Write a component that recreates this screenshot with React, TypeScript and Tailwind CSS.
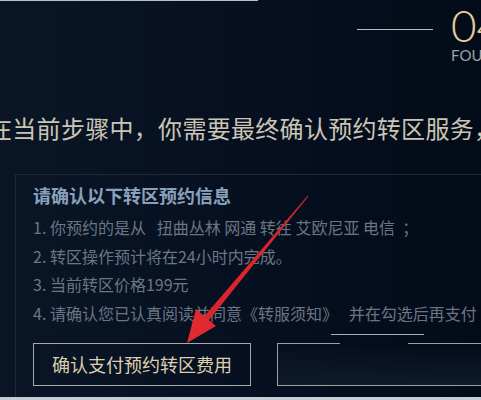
import React from 'react';

const CJK = { fontFamily: '"Noto Sans CJK SC", "Noto Sans", sans-serif' };

const ITEMS = [
  '1. 你预约的是从   扭曲丛林 网通 转往 艾欧尼亚 电信  ；',
  '2. 转区操作预计将在24小时内完成。',
  '3. 当前转区价格199元',
  '4. 请确认您已认真阅读并同意《转服须知》   并在勾选后再支付',
];

function Arrow() {
  // tip (187,342), tail (308,196)
  return (
    <svg className="absolute left-0 top-0 pointer-events-none" width="481" height="400" viewBox="0 0 481 400">
      <polygon points="308.4,196.3 307.6,195.7 203.6,316.9 208.4,321.1" fill="#d8262c" />
      <polygon points="187,343 196,309 216,326" fill="#e12a2f" />
    </svg>
  );
}

export default function App() {
  return (
    <div
      className="relative w-[481px] h-[400px] overflow-hidden bg-gradient-to-r from-[#0a1526] via-[#061021] to-[#040b18]"
      style={CJK}
    >
      {/* top strip */}
      <div className="h-px w-[258px] bg-[#b7c0ca]" />

      {/* step header */}
      <div className="flex pl-[357px] pt-[6px] h-[62px]">
        <div className="w-[76px] h-px bg-[#b9bcc0] mt-[22px] shrink-0" />
        <div className="ml-[18px] flex flex-col shrink-0">
          <div
            className="text-[44px] leading-[36px] font-light text-[#e2cf98] whitespace-nowrap"
            style={{ fontFamily: 'Lato, "Open Sans", sans-serif' }}
          >
            04
          </div>
          <div
            className="text-[15px] leading-[18px] mt-[3px] text-[#9ea3aa] whitespace-nowrap"
            style={{ fontFamily: 'Lato, "Open Sans", sans-serif' }}
          >
            FOUR
          </div>
        </div>
      </div>

      {/* headline */}
      <div className="mt-[50px] ml-[-12px] text-[24px] leading-[30px] tracking-[0.3px] text-[#cbc5b4] whitespace-nowrap">
        在当前步骤中，你需要最终确认预约转区服务，
      </div>

      {/* info box */}
      <div className="ml-[15px] mt-[31px] border-l border-t border-[#1f2935] pl-[17px] pt-[8px] h-[225px]">
        <div className="text-[18px] leading-[24px] font-bold text-[#8aa1bc] whitespace-nowrap">请确认以下转区预约信息</div>
        <div className="mt-[6px] flex flex-col">
          {ITEMS.map((t) => (
            <div key={t} className="text-[16px] leading-[28.5px] text-[#6b7684] whitespace-pre">
              {t}
            </div>
          ))}
        </div>

        <div className="mt-[16px] flex gap-[26px]">
          <button className="w-[218px] h-[43px] shrink-0 border border-[#a9a9a9] text-[18px] text-[#dccfae] bg-transparent">
            确认支付预约转区费用
          </button>
          <div className="relative w-[218px] h-[43px] shrink-0 border border-[#9c9fa3] bg-gradient-to-b from-transparent to-[#0e1a2a]">
            <div className="absolute top-[-1px] left-[62px] w-[68px] h-[2px] bg-[#050c18]" />
            <div className="absolute top-[-10px] left-[53px] w-[93px] h-px bg-[#a9adb2]" />
          </div>
        </div>
      </div>

      {/* bottom strip */}
      <div className="absolute left-0 bottom-0 w-full h-[3px] bg-[#c5ccd4]" />

      <Arrow />
    </div>
  );
}
